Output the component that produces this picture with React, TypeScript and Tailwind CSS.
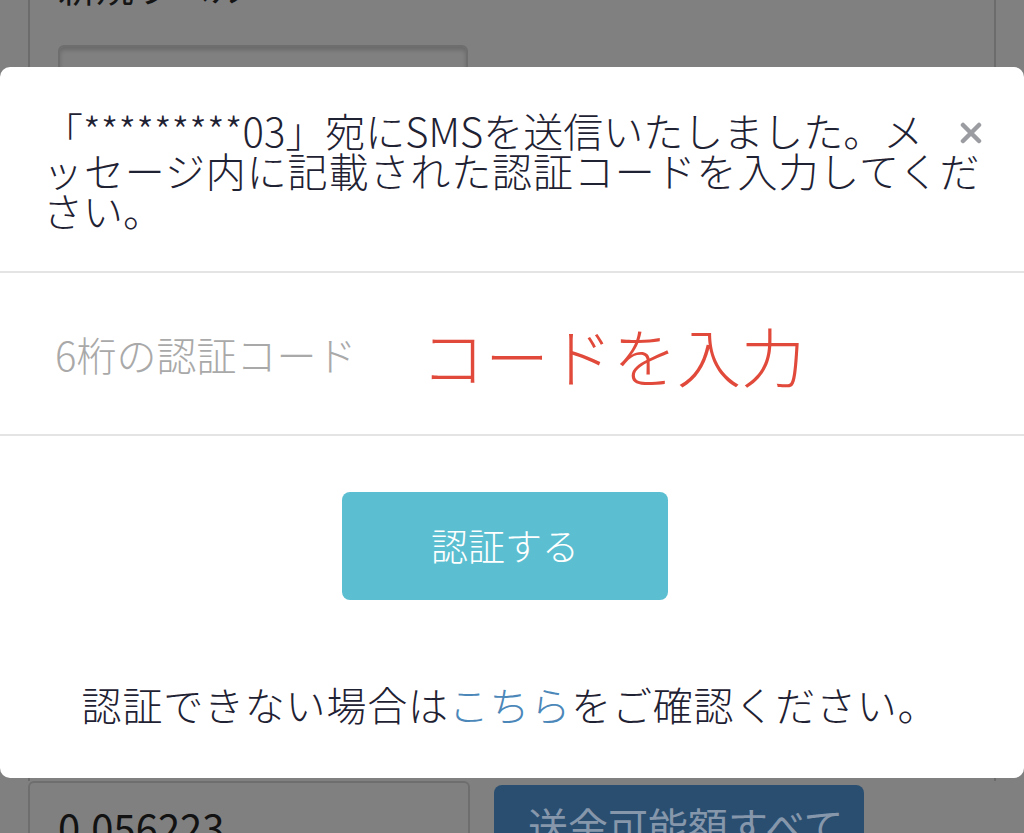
import React, {useState} from "react";

const jp = "font-['Noto_Sans_CJK_JP','Noto_Sans',sans-serif]";

const CloseIcon = () => (
    <svg width="22" height="22" viewBox="0 0 22 22" aria-hidden="true">
        <path d="M3 3 L19 19 M19 3 L3 19" stroke="#9b9ca1" strokeWidth="4.5" strokeLinecap="round"/>
    </svg>
);

// page behind the overlay
const Background = () => (
    <div className="flex flex-col">
        <div className="mx-[28px] -mt-[36px] h-[817px] border-x-2 border-[#6c6c6c] pl-[28px]">
            <p className={`${jp} text-[38px] leading-[44px] text-[#151515]`}>新規ラベル</p>
            <div className="mt-[37px] h-[80px] w-[410px] rounded-[6px] border-2 border-[#6e6e6e] shadow-[inset_0_3px_4px_rgba(0,0,0,0.18)]"/>
        </div>
        <div className="flex gap-[24px] pl-[28px]">
            <div className="h-[90px] w-[442px] rounded-[6px] border-2 border-[#6e6e6e] pl-[28px] pt-[22px]">
                <p className={`${jp} text-[40px] leading-[44px] text-[#121212]`}>0.056223</p>
            </div>
            <div className="mt-[4px] h-[90px] w-[370px] rounded-[8px] bg-[#2a4e70] pl-[34px] pt-[18px]">
                <p className={`${jp} text-[40px] leading-[44px] text-[#8697ab]`}>送金可能額すべて</p>
            </div>
        </div>
    </div>
);

const App = () => {
    const [code, setCode] = useState('');

    return (
        <div className={`relative h-[833px] w-full overflow-hidden bg-[#808080] ${jp}`}>
            <Background/>

            <div className="absolute inset-x-0 top-[67px] flex h-[711px] flex-col rounded-[10px] bg-white font-light">
                <button className="absolute right-[42px] top-[55px]">
                    <CloseIcon/>
                </button>

                <div className="border-b-2 border-[#e4e4e4] pb-[41px] pl-[43px] pr-[30px] pt-[43px]">
                    <p className="text-[40px] leading-[40px] text-[#1f2233]">
                        「*********03」宛にSMSを送信いたしました。メ<br/>
                        <span className="tracking-[0.9px]">ッセージ内に記載された認証コードを入力してくだ</span><br/>
                        さい。
                    </p>
                </div>

                <div className="flex h-[163px] items-center border-b-2 border-[#e4e4e4] pl-[55px]">
                    <input
                        type="text"
                        value={code}
                        onChange={(e) => setCode(e.target.value)}
                        placeholder="6桁の認証コード"
                        className="w-[340px] bg-transparent text-[40px] font-light text-[#1f2233] outline-none placeholder:text-[#a9a9a9]"
                    />
                    <span className="ml-[26px] text-[64px] leading-none text-[#e14a3b]">コードを入力</span>
                </div>

                <div className="flex justify-center pr-[14px] pt-[56px]">
                    <button
                        disabled={code.length !== 6}
                        className="h-[108px] w-[326px] rounded-[8px] bg-[#5cbfd1] text-[37px] font-light text-white"
                    >
                        認証する
                    </button>
                </div>

                <p className="mt-[84px] pr-[4px] text-center text-[40px] leading-[40px] tracking-[0.8px] text-[#1f2233]">
                    認証できない場合は<span className="text-[#4b87b9]">こちら</span>をご確認ください。
                </p>
            </div>
        </div>
    )
}

export default App
